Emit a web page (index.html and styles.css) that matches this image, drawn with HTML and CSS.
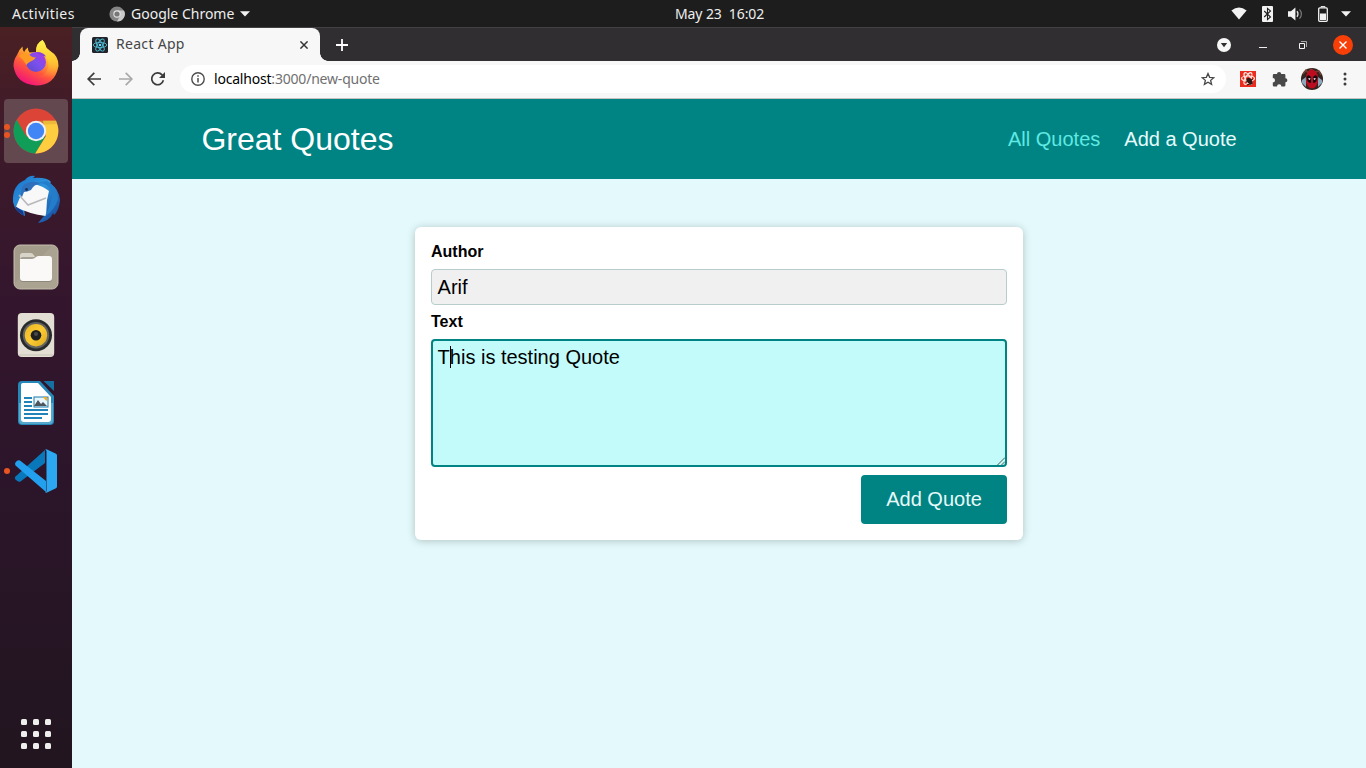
FILE: index.html
```html
<!DOCTYPE html>
<html lang="en">
<head>
<meta charset="utf-8">
<title>React App</title>
<link rel="stylesheet" href="styles.css">
</head>
<body>
<div class="topbar">
  <span class="activities">Activities</span>
  <div class="appmenu">
    <svg width="16" height="16" viewBox="0 0 16 16"><circle cx="8" cy="8" r="7.6" fill="#858585"/><path d="M8 4.4h7A7.6 7.6 0 0 1 8 15.6l3-5.5z" fill="#c9c9c9"/><circle cx="8" cy="8" r="3.7" fill="#e4e4e4"/><circle cx="8" cy="8" r="2.6" fill="#777"/></svg>
    <span class="appname">Google Chrome</span>
    <svg class="caret" width="10" height="6" viewBox="0 0 10 6"><path d="M0 .3h10L5 5.6z" fill="#f2f2f2"/></svg>
  </div>
  <span class="clock">May 23&nbsp; 16:02</span>
  <div class="status">
    <svg width="16" height="13" viewBox="0 0 16 13"><path d="M.4 3.4Q8-2.4 15.6 3.4L8 12.6z" fill="#f2f2f2"/></svg>
    <svg width="11" height="16" viewBox="0 0 11 16"><rect width="11" height="16" rx="1" fill="#f2f2f2"/><path d="M2.2 5l6.3 6-3 2.6V2.4l3 2.6-6.3 6" fill="none" stroke="#1d1d1d" stroke-width="1.1"/></svg>
    <svg width="15" height="14" viewBox="0 0 15 14"><path d="M0 4.3h3L7.4.6v12.8L3 9.7H0z" fill="#f2f2f2"/><path d="M9 4.2q2 2.8 0 5.6" fill="none" stroke="#ddd" stroke-width="1.3"/><path d="M11.5 2.3q3.8 4.7 0 9.4" fill="none" stroke="#777" stroke-width="1.2"/></svg>
    <svg width="10" height="16" viewBox="0 0 10 16"><path d="M3 1.500V.6h4v.9" fill="none" stroke="#f2f2f2"/><rect x=".7" y="1.900" width="8.600" height="13.400" rx="1" fill="none" stroke="#f2f2f2" stroke-width="1.300"/><path d="M2 7.500h6V14H2z" fill="#f2f2f2"/></svg>
    <svg width="10" height="6" viewBox="0 0 10 6"><path d="M0 .3h10L5 5.4z" fill="#f2f2f2"/></svg>
  </div>
</div>
<div class="desktop">
  <nav class="dock">
    <div class="slot">
      <svg width="48" height="48" viewBox="0 0 48 48">
        <defs>
          <linearGradient id="fx" x1=".8" y1="0" x2=".25" y2="1"><stop offset="0" stop-color="#fff14d"/><stop offset=".35" stop-color="#ffbd2d"/><stop offset=".65" stop-color="#ff563c"/><stop offset="1" stop-color="#f00b83"/></linearGradient>
          <linearGradient id="fp" x1="0" y1="1" x2="1" y2="0"><stop offset="0" stop-color="#5b49c8"/><stop offset=".5" stop-color="#7b50ed"/><stop offset="1" stop-color="#b833e1"/></linearGradient>
          <linearGradient id="fy" x1="0" y1="0" x2="0" y2="1"><stop offset="0" stop-color="#fff44f"/><stop offset=".5" stop-color="#ffcb33"/><stop offset="1" stop-color="#ff9640" stop-opacity="0"/></linearGradient>
        </defs>
        <path d="M5 16Q6.500 11 10.500 7.500 10.200 11 12.200 13 13.500 9.500 16 8.500 15.500 11 17.500 13.400L24 13Q24 4 30.500 1 33 3.500 34.500 9 36 10 37.500 11.500 47 17 46.500 27 43 46.500 24 46.500 4 45 1.500 27 1.500 21 5 16z" fill="url(#fx)"/>
        <circle cx="24" cy="23" r="10" fill="url(#fp)"/>
        <path d="M24 13Q24 4 30.500 1 33 3.500 34.500 9 36 10 37.500 11.500 46 18 44 30 39 43 27 38 37 34 36.500 25 36 19 31.500 17 34 14 24 13z" fill="url(#fy)"/>
        <path d="M7 17Q10 13 16.500 14.500 19 18.500 24 18.600 22.500 21 18.500 22.400 15 24 14.500 26 11 20 7 17z" fill="#ff9a22"/>
        <path d="M24 13Q31 12.500 34 17.500 28 17 26 14.500z" fill="#8a42dc"/>
      </svg>
    </div>
    <div class="slot active">
      <i class="dot dot-upper"></i><i class="dot dot-lower"></i>
      <svg width="48" height="48" viewBox="0 0 48 48">
        <circle cx="24" cy="24" r="22.400" fill="#db4437"/>
        <path d="M4.600 12.800A22.400 22.400 0 0 0 23.200 46.400L33.500 29.500H14.500z" fill="#0f9d58"/>
        <path d="M43.900 13.800A22.400 22.400 0 0 1 23.200 46.400L33.800 29.200 31 13.800z" fill="#ffcd40"/>
        <path d="M24 13.800H44L45 17 33 17.500z" fill="#d9a734" opacity=".5"/>
        <circle cx="24" cy="24" r="10.200" fill="#f1f1f1"/><circle cx="24" cy="24" r="8.200" fill="#4285f4"/>
      </svg>
    </div>
    <div class="slot">
      <svg width="48" height="48" viewBox="0 0 48 48">
        <defs><linearGradient id="tb" x1="0" y1="0" x2="1" y2="1"><stop stop-color="#1b73cc"/><stop offset=".45" stop-color="#2c93dc"/><stop offset="1" stop-color="#153e93"/></linearGradient></defs>
        <path d="M1 27Q0 10 13 5 17 0 23 1L21 3Q35 2 39 7L38 8.500Q47 14 48 25 47 36 42 40L41 38Q38 46 26 48L32 41 12 33 13 41Q3 37 1 27z" fill="url(#tb)"/>
        <path d="M11 15L22 9Q31 11 37 16L35 25 34 41Q17 39 4 32z" fill="#f8f8f8"/>
        <path d="M7 20L16 30 34 23" fill="none" stroke="#b8b8bd" stroke-width="1.500"/>
        <path d="M24 8Q36 7 40 17 40 28 33 41 42 36 46 24 45 11 35 6z" fill="#247dcb"/>
        <path d="M9 21Q8 10 15 8 23 5 28 9 22 9 19 15 15 17 12 17L10 22z" fill="#2f70bd"/><circle cx="14.500" cy="14.500" r="1.400" fill="#182e59"/>
        <path d="M3 31Q7 34 11 36L12 41 5 36z" fill="#173b8b"/>
      </svg>
    </div>
    <div class="slot">
      <svg width="48" height="48" viewBox="0 0 48 48"><rect x="2" y="2" width="44" height="44" rx="6" fill="#aba392" stroke="#c1bcac"/><path d="M3 40L40 3H9Q3 3 3 9z" fill="#9a927f" opacity=".4"/><path d="M8 16V12.500Q8 10 10.500 10H19q2 0 4 4h5v8H8z" fill="#d9d4ca"/><rect x="8" y="14" width="32" height="25" rx="3" fill="#706b60" opacity=".5"/><path d="M8 16h12q2 0 4-2 1-1 3-1h10q3 0 3 3v19q0 3-3 3H11q-3 0-3-3z" fill="#faf9f8"/></svg>
    </div>
    <div class="slot">
      <svg width="48" height="48" viewBox="0 0 48 48"><defs><linearGradient id="speaker" x1="0" y1="0" x2="1" y2="1"><stop stop-color="#e7b526"/><stop offset=".5" stop-color="#fccb32"/><stop offset="1" stop-color="#dca61e"/></linearGradient></defs><rect x="5.800" y="2" width="36.400" height="44" rx="4" fill="#e2ded3"/><path d="M7 44h34" stroke="#c9c3b8"/><circle cx="24" cy="24.200" r="16" fill="#292a2b"/><circle cx="24" cy="24.200" r="13.200" fill="#626462"/><circle cx="24" cy="24.200" r="11.200" fill="url(#speaker)"/><circle cx="24" cy="24.200" r="5.300" fill="#202020"/><circle cx="24" cy="23" r="2" fill="#484a4a"/></svg>
    </div>
    <div class="slot">
      <svg width="48" height="48" viewBox="0 0 48 48"><path d="M10 2H28L42 17V42q0 4-4 4H10q-4 0-4-4V6q0-4 4-4z" fill="#2687b9"/><path d="M7 24h34v17q0 4-3 4H10q-3 0-3-4z" fill="#57a8cc"/><path d="M31.500 2H42v10z" fill="#1670a1"/><path d="M11 4H26L39 18V40q0 3-3 3H12q-3 0-3-3V6q0-2 2-2z" fill="#fff"/><path d="M12 19h8m-8 4h8m-8 4h8m-8 4h24m-24 4h24M12 39h18" stroke="#2084b9" stroke-width="2"/><rect x="22" y="18" width="14" height="10" fill="#e7f5fc" stroke="#187aad"/><path d="M22 27l4-6 3 4 2-2 4 4z" fill="#4c555b"/><path d="M31 18h4v4q-2-1-4-4z" fill="#f2ac20"/></svg>
    </div>
    <div class="slot">
      <i class="dot"></i>
      <svg width="48" height="48" viewBox="0 0 48 48"><path d="M3.500 29.500L33 3v13L8.500 34.500q-2 1-5-2-1.500-1.500 0-3z" fill="#0878bb"/><path d="M8 13.500L34 34v11L3.500 18.500q-1-2 0-3 2-3 4.500-2z" fill="#23a0ed"/><path d="M33 3q1-1 2-.5l8.500 4q1.500.6 1.500 2v31q0 1.400-1.500 2L35 45.500q-1 .5-2-.5 1.500.5 1.500-1.500v-39Q34.500 2.500 33 3z" fill="#2ca8f2"/></svg>
    </div>
    <div class="apps"><i></i><i></i><i></i><i></i><i></i><i></i><i></i><i></i><i></i></div>
  </nav>
  <section class="browser">
    <div class="tabstrip">
      <div class="tab">
        <svg width="16" height="16" viewBox="0 0 16 16"><rect width="16" height="16" rx="1.500" fill="#20232a"/><g fill="none" stroke="#4fbbd3" stroke-width=".9"><ellipse cx="8" cy="8" rx="6.800" ry="2.600"/><ellipse cx="8" cy="8" rx="6.800" ry="2.600" transform="rotate(60 8 8)"/><ellipse cx="8" cy="8" rx="6.800" ry="2.600" transform="rotate(120 8 8)"/></g><circle cx="8" cy="8" r="1.300" fill="#61dafb"/></svg>
        <span class="tabtitle">React App</span>
        <svg width="8" height="8" viewBox="0 0 8 8"><path d="M.4.4l7.200 7.200m0-7.200L.4 7.600" stroke="#353535" stroke-width="1.500"/></svg>
      </div>
      <svg class="newtab" width="12" height="12" viewBox="0 0 12 12"><path d="M6 0v12M0 6h12" stroke="#fff" stroke-width="1.800"/></svg>
      <div class="controls">
        <svg width="14" height="14" viewBox="0 0 14 14"><circle cx="7" cy="7" r="7" fill="#f7f7f7"/><path d="M3.800 5h6.400L7 9.300z" fill="#302e30"/></svg>
        <svg class="min" width="8" height="8" viewBox="0 0 8 8"><path d="M0 6.500h8" stroke="#eee"/></svg>
        <svg class="max" width="8" height="8" viewBox="0 0 8 8"><path d="M2 .5h5.500V6" fill="none" stroke="#a9a9a9"/><path d="M.5 2.500h5v5h-5z" fill="none" stroke="#f5f5f5"/></svg>
        <svg class="close" width="20" height="20" viewBox="0 0 20 20"><circle cx="10" cy="10" r="10" fill="#f93f08"/><path d="M6.500 6.500l7 7m0-7l-7 7" stroke="#fff" stroke-width="1.400"/></svg>
      </div>
    </div>
    <div class="toolbar">
      <svg width="14" height="14" viewBox="0 0 14 14"><path d="M14 7H1.200M7.300.8L1.100 7l6.200 6.200" fill="none" stroke="#3c3c3c" stroke-width="1.700"/></svg>
      <svg class="forward" width="14" height="14" viewBox="0 0 14 14"><path d="M0 7h12.800M6.700.8L12.900 7l-6.200 6.200" fill="none" stroke="#a9a9a9" stroke-width="1.700"/></svg>
      <svg class="reload" width="14" height="14" viewBox="0 0 14 14"><path d="M12.400 8.300A5.900 5.900 0 1 1 11.100 2.900L13 4.800" fill="none" stroke="#3c3c3c" stroke-width="1.700"/><path d="M14 0v6H8z" fill="#3c3c3c"/></svg>
      <div class="address">
        <svg width="14" height="14" viewBox="0 0 14 14"><circle cx="7" cy="7" r="6.200" fill="none" stroke="#4d4d4d" stroke-width="1.400"/><path d="M7 6v4.500M7 3.200v1.600" stroke="#4d4d4d" stroke-width="1.500"/></svg>
        <span class="url"><b>localhost</b>:3000/new-quote</span>
        <svg class="star" width="14" height="14" viewBox="0 0 14 14"><path d="M7 1.500l1.650 3.800 4.100.38-3.100 2.700.95 4.050L7 10.250l-3.600 2.180.95-4.050-3.100-2.700 4.100-.38z" fill="none" stroke="#484848" stroke-width="1.300"/></svg>
      </div>
      <svg class="extension" width="16" height="16" viewBox="0 0 16 16"><path fill="#ec2c1d" d="M0 0h16v16H0z"/><g fill="none" stroke="#ffe5df" stroke-width="1.200"><ellipse cx="8" cy="7.500" rx="6.500" ry="2.500"/><ellipse cx="8" cy="7.500" rx="6.500" ry="2.500" transform="rotate(60 8 7.500)"/><ellipse cx="8" cy="7.500" rx="6.500" ry="2.500" transform="rotate(120 8 7.500)"/></g><ellipse cx="9.500" cy="10" rx="2.500" ry="3.500" transform="rotate(-40 9.500 10)" fill="#311713"/><path d="M6 11l7-3m-6 6l6-2m-3-5l1 7" stroke="#311713"/></svg>
      <svg class="puzzle" width="16" height="16" viewBox="0 0 16 16"><path d="M5 3a2.100 2.100 0 0 1 4.200 0h3q1.200 0 1.200 1.200v3a2 2 0 0 1 0 4v3q0 1.200-1.200 1.200H9.400a2.200 2.200 0 0 0-4.400 0H2q-1.200 0-1.200-1.200v-2.800a2.200 2.200 0 0 0 0-4.400V4.200Q.8 3 2 3z" fill="#484848"/></svg>
      <svg class="avatar" width="22" height="22" viewBox="0 0 22 22"><circle cx="11" cy="11" r="11" fill="#34241f"/><path d="M1 12l4-3v10L1 15zM21 12l-4-3v10l4-4z" fill="#8ba8bd"/><path d="M2 6l3-4 2 3 3-4 4 3 4-1 2 4" fill="none" stroke="#744032" stroke-width="1.500"/><ellipse cx="11" cy="11" rx="6.200" ry="9.500" fill="#bd0c20"/><path d="M5.500 9Q7 5.500 10 9v6Q6 15 5.500 9zM16.500 9Q15 5.500 12 9v6q4 0 4.500-6z" fill="#160b0e"/><path d="M6.800 10.800l2.600-.8-.4 2zM15.200 10.800l-2.600-.8.4 2z" fill="#fff"/></svg>
      <svg class="more" width="4" height="14" viewBox="0 0 4 14"><g fill="#3c3c3c"><circle cx="2" cy="2" r="1.500"/><circle cx="2" cy="7" r="1.500"/><circle cx="2" cy="12" r="1.500"/></g></svg>
    </div>
    <header class="site-header">
      <div class="logo">Great Quotes</div>
      <div class="links"><a class="current">All Quotes</a><a>Add a Quote</a></div>
    </header>
    <main class="page">
      <form class="card">
        <label for="author">Author</label>
        <div class="field" id="author">Arif</div>
        <label for="text">Text</label>
        <div class="field area" id="text">T<i class="cursor"></i>his is testing Quote
          <svg class="grip" width="8" height="8" viewBox="0 0 8 8"><path d="M.5 8L8 .5M4.500 8L8 4.500" stroke="#555" stroke-width="1"/></svg>
        </div>
        <div class="actions"><button type="button">Add Quote</button></div>
      </form>
    </main>
  </section>
</div>
</body>
</html>
```
FILE: styles.css
```css
* { box-sizing: border-box; }
body { margin: 0; width: 1366px; height: 768px; overflow: hidden; font-family: "Liberation Sans", Arial, sans-serif; }
svg { display: block; flex: none; }

.topbar { display: grid; grid-template-columns: 97px 578px 1fr auto; align-items: center; height: 27px; padding: 0 15px 0 12px; background: #1d1d1d; color: #eee; font: 14px/27px "Noto Sans", sans-serif; white-space: nowrap; }
.activities { letter-spacing: .45px; }
.appmenu { display: flex; align-items: center; }
.appname { width: 104px; margin: 0 5px 0 6px; }
.clock { grid-column: 3; margin-left: -12px; letter-spacing: -.1px; }
.status { display: flex; align-items: center; }
.status svg:nth-child(2) { margin-left: 15px; }
.status svg:nth-child(3) { margin-left: 15px; }
.status svg:nth-child(4) { margin-left: 15px; }
.status svg:nth-child(5) { margin-left: 13px; }

.desktop { display: flex; height: 741px; }
.dock { display: flex; flex: none; flex-direction: column; gap: 4px; width: 72px; padding: 4px; background: linear-gradient(#4a2023, #401b29 12%, #34162d 35%, #2c152a 60%, #21151f 100%); }
.slot { position: relative; display: flex; align-items: center; justify-content: center; height: 64px; border-radius: 4px; }
.slot.active { background: #644850; }
.dot { position: absolute; left: 0; top: 29px; width: 6px; height: 6px; border-radius: 50%; background: #e95420; }
.dot-upper { top: 25px; }
.dot-lower { top: 33px; }
.apps { display: grid; grid-template-columns: repeat(3, 6px); gap: 6px; margin: auto 0 15px 17px; }
.apps i { width: 6px; height: 6px; border-radius: 1.5px; background: #eeeeec; }

.browser { display: flex; flex-direction: column; flex: 1; min-width: 0; }
.tabstrip { display: flex; height: 34px; padding-left: 8px; background: #302e30; border-top: 1px solid #434143; }
.tab { position: relative; display: flex; align-items: center; width: 240px; padding: 0 12px; background: #f7f7f7; border-radius: 8px 8px 0 0; }
.tab::before, .tab::after { content: ""; position: absolute; bottom: 0; width: 8px; height: 8px; }
.tab::before { left: -8px; background: radial-gradient(circle at 0 0, #302e30 7.5px, #f7f7f7 8px); }
.tab::after { right: -8px; background: radial-gradient(circle at 100% 0, #302e30 7.5px, #f7f7f7 8px); }
.tabtitle { flex: 1; margin: -2px 0 0 8px; color: #464646; font: 14px "Noto Sans", sans-serif; letter-spacing: .3px; }
.newtab { align-self: center; margin-left: 16px; }
.controls { display: flex; align-items: center; margin-left: auto; padding-right: 13px; }
.min { margin-left: 28px; }
.max { margin-left: 32px; }
.close { margin-left: 26px; }

.toolbar { display: flex; align-items: center; height: 38px; padding: 0 19px 2px 15px; background: #f7f7f7; border-bottom: 1px solid #c7c3c3; }
.forward { margin-left: 18px; }
.reload { margin-left: 18px; }
.address { display: flex; align-items: center; width: 1046px; height: 28px; margin-left: 15px; padding: 0 11px; border-radius: 14px; background: #fff; }
.url { flex: 1; margin-left: 9px; color: #707070; font: 14px "Noto Sans", sans-serif; letter-spacing: -.2px; }
.url b { color: #000; font-weight: 400; }
.extension { margin-left: 14px; }
.puzzle { margin-left: 16px; }
.avatar { margin-left: 13px; }
.more { margin-left: 20px; }

.site-header { display: flex; align-items: center; justify-content: space-between; height: 80px; padding: 0 129.4px; background: #008383; color: #fff; }
.logo { font-size: 32px; }
.links { display: flex; gap: 24px; font-size: 20px; color: #e6fcfc; }
.current { color: #5fe9e2; }
.page { flex: 1; padding-top: 48px; background: #e3f9fb; }
.card { width: 608px; height: 313px; margin: 0 auto; padding: 16px; border-radius: 6px; background: #fff; box-shadow: 0 1px 8px rgba(0, 0, 0, .22); }
.card label { display: block; height: 18px; margin-bottom: 8px; font-size: 16px; font-weight: 700; line-height: 18px; }
.field { height: 36px; margin-bottom: 8px; padding: 0 5.6px; border: 1px solid #b9cccc; border-radius: 4px; background: #f0f0f0; font-size: 20px; line-height: 35px; }
.area { position: relative; height: 128px; padding: 0 4.6px; border: 2px solid #008383; background: #c2fbf9; line-height: 33px; }
.cursor { position: absolute; left: 17px; top: 5px; width: 1px; height: 22px; background: #000; }
.grip { position: absolute; right: 0; bottom: 0; }
.actions { display: flex; justify-content: flex-end; }
.actions button { width: 146px; height: 49px; padding: 0; border: 0; border-radius: 4px; background: #008383; color: #e7fafa; font: 20px "Liberation Sans", Arial, sans-serif; }
```
